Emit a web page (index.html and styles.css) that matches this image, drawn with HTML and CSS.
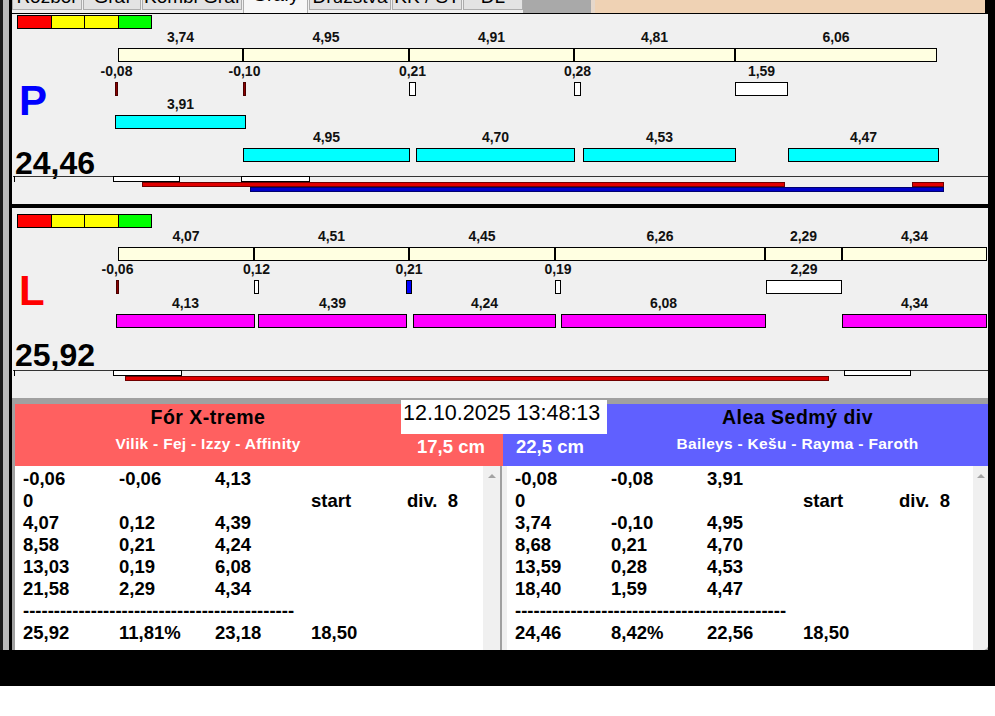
FILE: index.html
```html
<!DOCTYPE html>
<html>
<head>
<meta charset="utf-8">
<link rel="stylesheet" href="styles.css">
</head>
<body>
<div class="screen">
  <div class="edge-l"></div>
  <div class="main">
    <div class="tabs">
      <div class="tab w1"><span>Rozbor</span></div>
      <div class="tab w2"><span>Graf</span></div>
      <div class="tab w3"><span>Kombi Graf</span></div>
      <div class="tab w4 on"><span>Grafy</span></div>
      <div class="tab w5"><span>Družstva</span></div>
      <div class="tab w6"><span>KK / ST</span></div>
      <div class="tab w7"><span>DL</span></div>
      <div class="tab-gray"></div>
      <div class="tab-light"></div>
      <div class="tab-fill"></div>
      <div class="tab-end"></div>
    </div>

    <div class="panel panel-p">
      <div class="legend"><i class="c-r"></i><i class="c-y"></i><i class="c-y2"></i><i class="c-g"></i></div>
      <div class="letter letter-p">P</div>
      <div class="score score-p">24,46</div>
      <div class="plot">
        <div class="b seg pr1" style="left:106px;width:125px"><span>3,74</span></div>
        <div class="b seg pr1" style="left:231px;width:166px"><span>4,95</span></div>
        <div class="b seg pr1" style="left:397px;width:165px"><span>4,91</span></div>
        <div class="b seg pr1" style="left:562px;width:161px"><span>4,81</span></div>
        <div class="b seg pr1" style="left:723px;width:202px"><span>6,06</span></div>

        <div class="b neg pr2" style="left:103px;width:3px"><span>-0,08</span></div>
        <div class="b neg pr2" style="left:231px;width:3px"><span>-0,10</span></div>
        <div class="b wh pr2" style="left:397px;width:7px"><span>0,21</span></div>
        <div class="b wh pr2" style="left:562px;width:7px"><span>0,28</span></div>
        <div class="b wh pr2" style="left:723px;width:53px"><span>1,59</span></div>

        <div class="b cy pr3" style="left:103px;width:131px"><span>3,91</span></div>

        <div class="b cy pr4" style="left:231px;width:167px"><span>4,95</span></div>
        <div class="b cy pr4" style="left:404px;width:159px"><span>4,70</span></div>
        <div class="b cy pr4" style="left:571px;width:153px"><span>4,53</span></div>
        <div class="b cy pr4" style="left:776px;width:151px"><span>4,47</span></div>

        <div class="axis"></div>
        <div class="tick"></div>
        <div class="wb" style="left:101px;width:67px"></div>
        <div class="wb" style="left:229px;width:69px"></div>
        <div class="rl" style="left:130px;width:643px"></div>
        <div class="rl" style="left:900px;width:32px"></div>
        <div class="bll" style="left:238px;width:694px"></div>
      </div>
    </div>

    <div class="sep"></div>

    <div class="panel panel-l">
      <div class="legend"><i class="c-r"></i><i class="c-y"></i><i class="c-y2"></i><i class="c-g"></i></div>
      <div class="letter letter-l">L</div>
      <div class="score score-l">25,92</div>
      <div class="plot">
        <div class="b seg lr1" style="left:106px;width:136px"><span>4,07</span></div>
        <div class="b seg lr1" style="left:242px;width:155px"><span>4,51</span></div>
        <div class="b seg lr1" style="left:397px;width:146px"><span>4,45</span></div>
        <div class="b seg lr1" style="left:543px;width:210px"><span>6,26</span></div>
        <div class="b seg lr1" style="left:753px;width:77px"><span>2,29</span></div>
        <div class="b seg lr1" style="left:830px;width:145px"><span>4,34</span></div>

        <div class="b neg lr2" style="left:104px;width:3px"><span>-0,06</span></div>
        <div class="b wh lr2" style="left:242px;width:5px"><span>0,12</span></div>
        <div class="b bl lr2" style="left:394px;width:6px"><span>0,21</span></div>
        <div class="b wh lr2" style="left:543px;width:6px"><span>0,19</span></div>
        <div class="b wh lr2" style="left:754px;width:76px"><span>2,29</span></div>

        <div class="b mg lr3" style="left:104px;width:139px"><span>4,13</span></div>
        <div class="b mg lr3" style="left:246px;width:149px"><span>4,39</span></div>
        <div class="b mg lr3" style="left:401px;width:143px"><span>4,24</span></div>
        <div class="b mg lr3" style="left:549px;width:205px"><span>6,08</span></div>
        <div class="b mg lr3" style="left:830px;width:145px"><span>4,34</span></div>

        <div class="axis"></div>
        <div class="tick"></div>
        <div class="wb" style="left:101px;width:69px"></div>
        <div class="wb" style="left:832px;width:67px"></div>
        <div class="rl" style="left:113px;width:704px"></div>
      </div>
    </div>

    <div class="bottom">
      <div class="heads">
        <div class="head-l">
          <div class="names">
            <div class="title">Fór X-treme</div>
            <div class="sub">Vilik - Fej - Izzy - Affinity</div>
          </div>
          <div class="cm">17,5 cm</div>
        </div>
        <div class="head-r">
          <div class="cm">22,5 cm</div>
          <div class="names">
            <div class="title">Alea Sedmý div</div>
            <div class="sub">Baileys - Kešu - Rayma - Faroth</div>
          </div>
        </div>
      </div>
      <div class="lists">
        <div class="list list-l">
          <div class="rows">
            <div class="row"><span>-0,06</span><span>-0,06</span><span>4,13</span></div>
            <div class="row"><span>0</span><span></span><span></span><span>start</span><span>div.  8</span></div>
            <div class="row"><span>4,07</span><span>0,12</span><span>4,39</span></div>
            <div class="row"><span>8,58</span><span>0,21</span><span>4,24</span></div>
            <div class="row"><span>13,03</span><span>0,19</span><span>6,08</span></div>
            <div class="row"><span>21,58</span><span>2,29</span><span>4,34</span></div>
            <div class="row"><span class="dash">--------------------------------------------</span></div>
            <div class="row"><span>25,92</span><span>11,81%</span><span>23,18</span><span>18,50</span></div>
          </div>
          <div class="sb"></div>
        </div>
        <div class="gap"></div>
        <div class="list list-r">
          <div class="rows">
            <div class="row"><span>-0,08</span><span>-0,08</span><span>3,91</span></div>
            <div class="row"><span>0</span><span></span><span></span><span>start</span><span>div.  8</span></div>
            <div class="row"><span>3,74</span><span>-0,10</span><span>4,95</span></div>
            <div class="row"><span>8,68</span><span>0,21</span><span>4,70</span></div>
            <div class="row"><span>13,59</span><span>0,28</span><span>4,53</span></div>
            <div class="row"><span>18,40</span><span>1,59</span><span>4,47</span></div>
            <div class="row"><span class="dash">--------------------------------------------</span></div>
            <div class="row"><span>24,46</span><span>8,42%</span><span>22,56</span><span>18,50</span></div>
          </div>
          <div class="sb"></div>
        </div>
      </div>
      <div class="date">12.10.2025 13:48:13</div>
    </div>
  </div>
  <div class="edge-r"></div>
</div>
<div class="footer"></div>
</body>
</html>
```

FILE: styles.css
```css
* { box-sizing: border-box; }
html, body { margin: 0; padding: 0; background: #fff; }
body {
  width: 995px;
  height: 716px;
  overflow: hidden;
  font-family: "Liberation Sans", Arial, sans-serif;
  color: #000;
}
.screen { display: flex; width: 995px; height: 650px; }
.edge-l {
  width: 12px;
  flex: none;
  background: linear-gradient(to right, #1a1a1a 0 3px, #b8b8b8 3px 9px, #000 9px 12px);
}
.edge-r { width: 7px; flex: none; background: #000; }
.main { flex: 1; min-width: 0; display: flex; flex-direction: column; }
.footer { height: 36px; background: #000; }

/* tabs */
.tabs {
  height: 14px;
  flex: none;
  display: flex;
  background: #f0f0f0;
  border-bottom: 1px solid #000;
}
.tab {
  flex: none;
  height: 10px;
  border: 1px solid #adadad;
  border-top: 0;
  background: #e3e3e3;
  overflow: hidden;
  display: flex;
  justify-content: center;
  font-size: 19px;
  line-height: 19px;
  white-space: nowrap;
  margin-right: 1px;
}
.tab span { margin-top: -13px; }
.tab.on { height: 13px; background: #f7f7f7; border-bottom: 0; }
.tab.on span { margin-top: -15px; }
.w1 { width: 70px; }
.w2 { width: 58px; }
.w3 { width: 100px; }
.w4 { width: 65px; }
.w5 { width: 82px; }
.w6 { width: 70px; }
.w7 { width: 60px; margin-right: 0; }
.tab-gray { width: 68px; height: 13px; background: #a9a9a9; flex: none; }
.tab-light { width: 4px; height: 13px; background: #e6d8cb; flex: none; }
.tab-fill { flex: 1; height: 13px; background: #efd2b4; }
.tab-end { width: 3px; height: 13px; background: #000; flex: none; }

/* chart panels */
.panel { position: relative; height: 190px; flex: none; background: #f0f0f0; }
.sep { height: 4px; flex: none; background: #000; }
.legend { display: flex; margin-left: 5px; }
.panel-p .legend { margin-top: 1px; }
.panel-l .legend { margin-top: 6px; }
.legend i { height: 14px; border: 1px solid #000; margin-left: -1px; }
.legend i:first-child { margin-left: 0; }
.c-r { width: 35px; background: #ff0000; }
.c-y { width: 34px; background: #ffff00; }
.c-y2 { width: 35px; background: #ffff00; }
.c-g { width: 34px; background: #00ff00; }

.letter { font-weight: bold; font-size: 42px; line-height: 42px; margin-left: 7px; }
.letter-p { color: #0000ff; margin-top: 50.5px; }
.letter-l { color: #ff0000; margin-top: 41.5px; }
.score { font-weight: bold; font-size: 32px; line-height: 32px; margin-left: 3px; }
.score-p { margin-top: 25.5px; }
.score-l { margin-top: 27.5px; }

.plot { position: absolute; inset: 0; }
.b { position: absolute; height: 14px; border: 1px solid #000; }
.b > span {
  position: absolute;
  top: -18px;
  left: -30px;
  right: -30px;
  text-align: center;
  font-weight: bold;
  font-size: 14px;
  line-height: 13px;
  white-space: nowrap;
  color: #111;
}
.pr1 { top: 34px; }
.pr2 { top: 68px; }
.pr3 { top: 101px; }
.pr4 { top: 134px; }
.lr1 { top: 39px; }
.lr2 { top: 72px; }
.lr3 { top: 106px; }
.seg { background: #ffffe1; }
.cy { background: #00ffff; }
.mg { background: #ff00ff; }
.neg { background: #8b0000; border-color: #4a0000; }
.wh { background: #fff; }
.bl { background: #0000ff; }

.axis { position: absolute; left: 1px; right: 0; top: 162px; height: 1px; background: #333; }
.tick { position: absolute; left: 2px; top: 162px; width: 1px; height: 6px; background: #000; }
.wb { position: absolute; top: 162px; height: 6px; border: 1px solid #000; background: #fff; }
.rl { position: absolute; top: 168px; height: 5px; background: #e00000; border: 1px solid #700000; }
.bll { position: absolute; top: 173px; height: 5px; background: #0000c8; border: 1px solid #000070; }

/* bottom */
.bottom {
  position: relative;
  flex: 1;
  display: flex;
  flex-direction: column;
  background: #a0a0a0;
  padding: 6px 0 0 3px;
}
.heads { display: flex; height: 62px; flex: none; }
.head-l { width: 488px; flex: none; display: flex; background: #ff6060; }
.head-r { flex: 1; display: flex; background: #6060ff; }
.names { display: flex; flex-direction: column; align-items: center; padding-top: 1.5px; }
.head-l .names { width: 386px; flex: none; }
.head-r .names { flex: 1; }
.title { font-weight: bold; font-size: 19.5px; line-height: 22px; letter-spacing: 0.5px; color: #000; white-space: nowrap; }
.sub { font-weight: bold; font-size: 15.5px; line-height: 18px; letter-spacing: 0.3px; color: #fff; margin-top: 7px; white-space: nowrap; }
.cm {
  align-self: flex-end;
  font-weight: bold;
  font-size: 18.5px;
  line-height: 22px;
  color: #fff;
  padding-bottom: 8.3px;
  white-space: nowrap;
}
.head-l .cm { width: 102px; padding-left: 16px; }
.head-r .cm { width: 104px; flex: none; padding-left: 13px; }
.date {
  position: absolute;
  left: 389px;
  top: 2px;
  width: 206px;
  height: 34px;
  background: #fff;
  font-size: 21.5px;
  line-height: 26px;
  padding-left: 2px;
  white-space: nowrap;
}

.lists { flex: 1; display: flex; min-height: 0; }
.list { display: flex; background: #fff; min-width: 0; }
.list-l { width: 485px; flex: none; }
.gap { width: 7px; flex: none; background: #f0f0f0; border-left: 2px solid #a0a0a0; }
.list-r { flex: 1; border-bottom-right-radius: 5px; overflow: hidden; }
.rows {
  flex: 1;
  min-width: 0;
  overflow: hidden;
  padding: 2.4px 0 0 8px;
  font-weight: bold;
  font-size: 18.5px;
  line-height: 22px;
}
.row { display: grid; grid-template-columns: 96px 96px 96px 96px auto; white-space: pre; height: 22px; }
.dash { grid-column: 1 / -1; }
.sb { width: 17px; flex: none; position: relative; background: #f0f0f0; }
.list-r .sb { width: 15px; }
.sb::before {
  content: "";
  position: absolute;
  top: 8px;
  left: 50%;
  margin-left: -4px;
  border-left: 4px solid transparent;
  border-right: 4px solid transparent;
  border-bottom: 4px solid #a3a3a3;
}
```
